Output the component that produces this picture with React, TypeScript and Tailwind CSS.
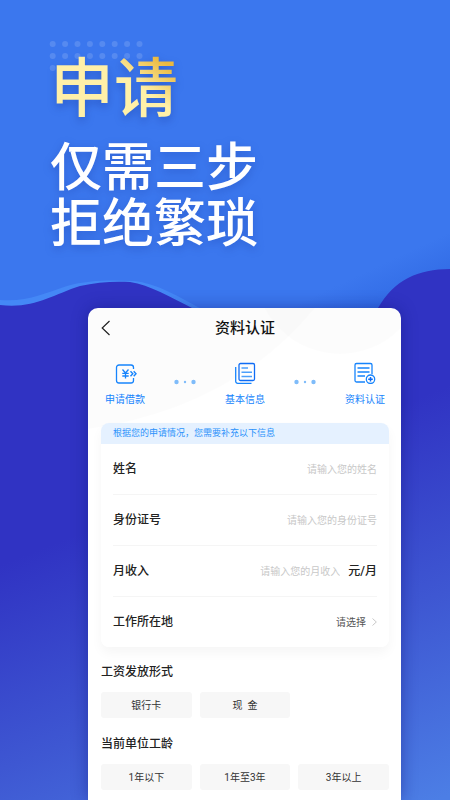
import type { ReactNode } from 'react';

interface Step {
  label: string;
  icon: ReactNode;
}

interface TextField {
  id: string;
  label: string;
  placeholder: string;
  unit?: string;
}

interface OptionGroupProps {
  title: string;
  options: string[];
}

const steps: Step[] = [
  { label: '申请借款', icon: <LoanIcon /> },
  { label: '基本信息', icon: <ProfileIcon /> },
  { label: '资料认证', icon: <VerifyIcon /> }
];

const fields: TextField[] = [
  { id: 'name', label: '姓名', placeholder: '请输入您的姓名' },
  { id: 'id-number', label: '身份证号', placeholder: '请输入您的身份证号' },
  { id: 'income', label: '月收入', placeholder: '请输入您的月收入', unit: '元/月' }
];

function LoanIcon() {
  return (
    <svg className="h-6 w-6" viewBox="0 0 24 24" fill="none" stroke="#1684fc" strokeWidth="1.3" aria-hidden="true">
      <path d="M20.500 9V7.500a2.500 2.500 0 0 0-2.500-2.500H6a2.500 2.500 0 0 0-2.500 2.500v13A2.500 2.500 0 0 0 6 23h12a2.500 2.500 0 0 0 2.500-2.500V18" />
      <path d="M9.500 9.500l3 3.500 3-3.500M12.500 13v5.500M9.300 13.300h6.400M9.300 16h6.400" />
      <path d="M17.500 11.200l2.300 2.500-2.300 2.500M20.700 11.200l2.300 2.500-2.300 2.500" strokeWidth="1.400" />
    </svg>
  );
}

function ProfileIcon() {
  return (
    <svg className="h-6 w-6" viewBox="0 0 24 24" fill="none" strokeWidth="1.300" aria-hidden="true">
      <path d="M2.700 7v14.300a2 2 0 0 0 2 2H18.500" stroke="#1684fc" />
      <rect x="6" y="3.500" width="15.500" height="17" rx="1.500" stroke="#0f6cf5" />
      <path d="M8.500 8h6.500M8.500 12.200h10.500M8.500 16.500h10.500" stroke="#4c9ffb" strokeWidth="1.600" />
    </svg>
  );
}

function VerifyIcon() {
  return (
    <svg className="h-6 w-6" viewBox="0 0 24 24" fill="none" stroke="#1684fc" strokeWidth="1.300" aria-hidden="true">
      <path d="M19 14V5a1.500 1.500 0 0 0-1.500-1.500h-14A1.500 1.500 0 0 0 2 5v15.500A1.500 1.500 0 0 0 3.500 22h8.500" />
      <path d="M4.500 8h12M4.500 12h12M4.500 16h7.500" />
      <circle cx="17.500" cy="19.200" r="4.200" />
      <path d="M17.500 16.900v4.600M15.200 19.200h4.600" stroke="#0f6cf5" strokeWidth="1.500" />
    </svg>
  );
}

function StepDots() {
  return (
    <svg className="mt-[18px] h-2 w-6" viewBox="0 0 24 8" fill="#7fbcfa" aria-hidden="true">
      <circle cx="3.500" cy="4" r="2.200" />
      <circle cx="12" cy="4" r="1.200" />
      <circle cx="20.500" cy="4" r="2.200" />
    </svg>
  );
}

function Backdrop() {
  return (
    <svg
      className="absolute inset-0 -z-10 h-full w-full"
      viewBox="0 0 450 800"
      preserveAspectRatio="none"
      aria-hidden="true"
    >
      <defs>
        <linearGradient id="sky" gradientUnits="userSpaceOnUse" x1="450" y1="232" x2="482" y2="300">
          <stop offset="0" stopColor="#3b77ee" />
          <stop offset="1" stopColor="#2a62df" />
        </linearGradient>
        <linearGradient id="sea" gradientUnits="userSpaceOnUse" x1="0" y1="565" x2="141" y2="918">
          <stop offset="0" stopColor="#3033c3" />
          <stop offset="0.5" stopColor="#3e57d2" />
          <stop offset="1" stopColor="#4c7ee5" />
        </linearGradient>
      </defs>
      <rect width="450" height="800" fill="url(#sky)" />
      <path
        d="M0 300C28 302 45 293 67 286C88 280 110 280 133 281C158 283 180 298 202 309L215 340H0Z"
        fill="#4488f6"
      />
      <path
        d="M0 305C34 309 52 295 80 286C96 282 116 281 130 282C150 285 170 297 192 308C260 345 350 350 378 308C394 280 418 269 450 269V800H0Z"
        fill="url(#sea)"
      />
      <g fill="#fff" fillOpacity="0.14">
        {[0, 1, 2, 3, 4, 5, 6, 7].map((col) => (
          <g key={col}>
            <circle cx={52.700 + col * 12.400} cy="44" r="3" />
            <circle cx={52.700 + col * 12.400} cy="56" r="3" />
          </g>
        ))}
        <circle cx="52.700" cy="68" r="3" />
      </g>
    </svg>
  );
}

function OptionGroup({ title, options }: OptionGroupProps) {
  return (
    <section>
      <h2 className="text-xs leading-4 font-medium text-[#222]">{title}</h2>
      <div className="mt-3 grid grid-cols-3 gap-2">
        {options.map((option) => (
          <button key={option} type="button" className="h-[26px] rounded-[3px] bg-[#f7f7f7] text-[10px] text-[#333]">
            {option}
          </button>
        ))}
      </div>
    </section>
  );
}

export default function App() {
  return (
    <div className="relative isolate flex min-h-screen flex-col overflow-hidden pr-[49px] pl-[88px] font-['Roboto','Noto_Sans_CJK_SC',sans-serif]">
      <Backdrop />

      <h1 className="-ml-[38px] pt-[54px] font-medium whitespace-nowrap text-white">
        <span className="block text-[64px] leading-[72px] drop-shadow-[0_4px_4px_rgba(20,50,150,0.35)]">
          <span className="bg-[linear-gradient(35deg,#fff0a8_62%,#eab83f_88%)] bg-clip-text text-transparent">申请</span>
        </span>
        <span className="mt-[15px] block text-[52px] leading-[56px] drop-shadow-[0_3px_4px_rgba(20,50,150,0.3)]">
          仅需三步
          <br />
          拒绝繁琐
        </span>
      </h1>

      <main className="relative isolate mt-[55px] flex-1 overflow-hidden rounded-t-[10px] bg-white pr-3 pb-[10px] pl-[13px] shadow-[0_0_16px_rgba(15,20,120,0.45)]">
        <svg className="absolute top-0 left-0 -z-10 h-[122px] w-full" viewBox="0 0 313 122" preserveAspectRatio="none" aria-hidden="true">
          <path d="M0 0H227Q145 100 0 121Z" fill="#000" fillOpacity="0.013" />
          <circle cx="252" cy="-39" r="85" fill="#000" fillOpacity="0.013" />
        </svg>

        <header className="grid h-10 grid-cols-[12px_1fr_12px] items-center">
          <button type="button" aria-label="返回">
            <svg className="h-4 w-3" viewBox="0 0 12 16" fill="none" stroke="#222" strokeWidth="1.200" aria-hidden="true">
              <path d="M8.500 1L1.200 8l7.300 7" />
            </svg>
          </button>
          <span className="text-center text-[15px] leading-5 font-medium text-[#111]">资料认证</span>
        </header>

        <ol className="mt-3 flex items-start justify-between px-1">
          {steps.map((step, index) => (
            <li key={step.label} className="contents">
              {index > 0 && <StepDots />}
              <div className="flex flex-col items-center gap-2 text-[10px] leading-4 text-[#1684fc]">
                {step.icon}
                <span>{step.label}</span>
              </div>
            </li>
          ))}
        </ol>

        <form className="mt-[15px]">
          <div className="rounded-lg shadow-[0_6px_12px_rgba(0,0,0,0.04)]">
            <p className="rounded-t-lg bg-[#e5f1ff] px-3 text-[9px] leading-[21px] text-[#2b91fb]">
              根据您的申请情况，您需要补充以下信息
            </p>
            <div className="rounded-b-lg bg-white px-3">
              {fields.map((field) => (
                <div key={field.id} className="flex h-[51px] items-center border-b border-[#f5f5f5]">
                  <label htmlFor={field.id} className="text-xs font-medium text-[#222]">
                    {field.label}
                  </label>
                  <input
                    id={field.id}
                    type="text"
                    placeholder={field.placeholder}
                    className="min-w-0 flex-1 bg-transparent text-right text-[10px] outline-none placeholder:text-[#c8c8c8]"
                  />
                  {field.unit && <span className="ml-2 text-xs font-medium text-[#222]">{field.unit}</span>}
                </div>
              ))}
              <div className="flex h-[50px] items-center justify-between">
                <label htmlFor="workplace" className="text-xs font-medium text-[#222]">
                  工作所在地
                </label>
                <div className="flex items-center gap-[6px]">
                  <select id="workplace" className="appearance-none bg-transparent text-[10px] text-[#555] outline-none">
                    <option>请选择</option>
                  </select>
                  <svg className="h-2 w-[5px]" viewBox="0 0 5 8" fill="none" stroke="#bbb" strokeWidth="0.800" aria-hidden="true">
                    <path d="M0.500 0.500L4.300 4 0.500 7.500" />
                  </svg>
                </div>
              </div>
            </div>
          </div>

          <div className="mt-[17px] flex flex-col gap-[18px]">
            <OptionGroup title="工资发放形式" options={['银行卡', '现\u2002金']} />
            <OptionGroup title="当前单位工龄" options={['1年以下', '1年至3年', '3年以上']} />
          </div>
        </form>
      </main>
    </div>
  );
}
